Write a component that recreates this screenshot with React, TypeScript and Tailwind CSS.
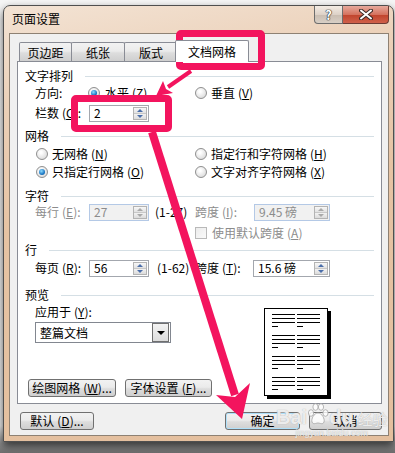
import type { ReactNode } from 'react'

const PINK = '#f3145e'

function K({ k }: { k: string }) {
  return (
    <span className="ml-[3px]">
      (<span className="underline">{k}</span>)
    </span>
  )
}

function Heading({ label, gap = 'ml-[12px]' }: { label: string; gap?: string }) {
  return (
    <div className="flex h-[14px] items-center">
      <span>{label}</span>
      <span className={`h-px flex-1 bg-[#d5dfe5] ${gap}`} />
    </div>
  )
}

function Radio({ checked }: { checked?: boolean }) {
  return (
    <span className="flex h-[12px] w-[12px] shrink-0 items-center justify-center rounded-full border border-[#8f8f8f] bg-[radial-gradient(circle_at_40%_35%,#ffffff_10%,#d6d6d6_90%)]">
      {checked && (
        <span className="h-[6px] w-[6px] rounded-full bg-[radial-gradient(circle_at_40%_35%,#8fdcff_0%,#1c78c4_60%,#0d4f8e_100%)]" />
      )}
    </span>
  )
}

function SpinArrows({ disabled }: { disabled?: boolean }) {
  const tri = disabled ? 'border-[#a9a9a9]' : 'border-[#4b6ea9]'
  return (
    <div className="m-px flex w-[14px] flex-col border border-[#b3b3b3]">
      <div className="flex flex-1 items-center justify-center border-b border-[#c8c8c8] bg-[linear-gradient(#f7f7f7,#e2e2e2)]">
        <span className={`h-0 w-0 border-x-[3px] border-b-[3px] border-x-transparent ${tri} border-t-0`} />
      </div>
      <div className="flex flex-1 items-center justify-center bg-[linear-gradient(#f2f2f2,#dcdcdc)]">
        <span className={`h-0 w-0 border-x-[3px] border-t-[3px] border-x-transparent ${tri} border-b-0`} />
      </div>
    </div>
  )
}

function Spin({ value, width, disabled }: { value: string; width: string; disabled?: boolean }) {
  return (
    <div
      className={`flex h-[17px] items-stretch border ${width} ${
        disabled ? 'border-[#b4c9e6] bg-[#f1f1f1] text-[#8c8c8c]' : 'border-[#a3a7ae] bg-white text-black'
      }`}
    >
      <span className="flex flex-1 items-center pl-[4px]">{value}</span>
      <SpinArrows disabled={disabled} />
    </div>
  )
}

function Btn({ children, className = '' }: { children: ReactNode; className?: string }) {
  return (
    <button
      type="button"
      className={`flex h-[18px] items-center justify-center rounded-[3px] border border-[#707070] bg-[linear-gradient(#f2f2f2_0%,#ebebeb_45%,#dddddd_55%,#cfcfcf_100%)] text-[12px] leading-[14px] ${className}`}
    >
      {children}
    </button>
  )
}

function Row({ children }: { children: ReactNode }) {
  return <div className="ml-[10px] flex h-[18px] items-center">{children}</div>
}

function PreviewPage() {
  return (
    <div className="mt-[6px] h-[88px] w-[64px] border border-black bg-white shadow-[3px_3px_0_#000]">
      <div className="flex gap-[2px] pl-[7px] pt-[5px]">
        {[0, 1].map(c => (
          <div key={c} className="flex w-[23px] flex-col">
            {[0, 1, 2, 3].map(g => (
              <div key={g} className="mb-[8px] flex flex-col gap-[3px]">
                <div className="h-px bg-black" />
                <div className="h-px bg-black" />
                <div className="h-px bg-black" />
                <div className="h-px w-[6px] bg-black" />
              </div>
            ))}
          </div>
        ))}
      </div>
    </div>
  )
}

export default function App() {
  return (
    <div className="relative h-[453px] w-[395px] overflow-hidden bg-[linear-gradient(#f6f6f6_0%,#ececec_94%,#8c8c8c_98%,#6f6f6f_100%)] pl-[3px] pt-[5px] font-['Noto_Sans_CJK_SC','Liberation_Sans',sans-serif] text-[12px] leading-[14px] text-black">
      {/* window */}
      <div className="flex h-[437px] w-[391px] flex-col rounded-t-[7px] border border-[#4f4f4f] bg-[linear-gradient(170deg,#f3e3d4_0%,#ebd0b8_20%,#e6c3a3_45%,#e4bf9e_100%)] shadow-[0_4px_9px_rgba(0,0,0,0.65)]">
        {/* title bar */}
        <div className="flex h-[27px] items-start">
          <span className="pl-[8px] pt-[6px]">页面设置</span>
          <div className="ml-auto mr-[4px] flex">
            <div className="flex h-[18px] w-[29px] items-center justify-center rounded-bl-[4px] border border-t-0 border-[#6d6d6d] bg-[linear-gradient(#f4ece4_0%,#ddd2c8_50%,#c9bdb1_51%,#d8cfc6_100%)] text-[13px] font-bold text-white [text-shadow:0_0_1px_#222,0_0_1px_#222,0_0_1px_#222]">
              ?
            </div>
            <div className="flex h-[18px] w-[46px] items-center justify-center rounded-br-[4px] border border-l-0 border-t-0 border-[#6d3b33] bg-[linear-gradient(#e7a99c_0%,#d5735f_50%,#c0432c_51%,#d0604a_100%)]">
              <svg width="14" height="11" viewBox="0 0 14 11">
                <path d="M2 1.5 L12 9.5 M12 1.5 L2 9.5" stroke="#3b2a26" strokeWidth="4" strokeLinecap="round" />
                <path d="M2 1.5 L12 9.5 M12 1.5 L2 9.5" stroke="#ffffff" strokeWidth="2" strokeLinecap="round" />
              </svg>
            </div>
          </div>
        </div>

        {/* client */}
        <div className="ml-[5px] mr-[4px] flex h-[403px] flex-col border border-[#8e8173] bg-[#f0f0f0]">
          {/* tabs */}
          <div className="ml-[7px] mt-[6px] flex h-[21px] items-end pl-[2px]">
            <div className="flex h-[19px] w-[53px] items-center justify-center rounded-t-[2px] border border-b-0 border-[#898c95] bg-[linear-gradient(#f2f2f2_0%,#ebebeb_45%,#dddddd_55%,#cfcfcf_100%)] pt-px">
              页边距
            </div>
            <div className="-ml-px flex h-[19px] w-[54px] items-center justify-center rounded-t-[2px] border border-b-0 border-[#898c95] bg-[linear-gradient(#f2f2f2_0%,#ebebeb_45%,#dddddd_55%,#cfcfcf_100%)] pt-px">
              纸张
            </div>
            <div className="-ml-px flex h-[19px] w-[54px] items-center justify-center rounded-t-[2px] border border-b-0 border-[#898c95] bg-[linear-gradient(#f2f2f2_0%,#ebebeb_45%,#dddddd_55%,#cfcfcf_100%)] pt-px">
              版式
            </div>
            <div className="relative z-10 -mb-px -ml-[3px] flex h-[22px] w-[74px] items-center justify-center rounded-t-[2px] border border-b-0 border-[#898c95] bg-white">
              文档网格
            </div>
          </div>

          {/* panel */}
          <div className="ml-[7px] flex h-[343px] w-[365px] flex-col border border-[#898c95] bg-white px-[7px]">
            <div className="mt-[7px]">
              <Heading label="文字排列" />
            </div>
            <div className="mt-px">
              <Row>
                <div className="flex w-[160px] items-center">
                  <span className="w-[53px]">方向:</span>
                  <Radio checked />
                  <span className="ml-[5px]">
                    水平<K k="Z" />
                  </span>
                </div>
                <Radio />
                <span className="ml-[4px]">
                  垂直<K k="V" />
                </span>
              </Row>
            </div>
            <div className="mt-[2px]">
              <Row>
                <span className="w-[54px]">
                  栏数<K k="C" />:
                </span>
                <Spin value="2" width="w-[60px]" />
              </Row>
            </div>

            <div className="mt-[7px]">
              <Heading label="网格" />
            </div>
            <div className="mt-[2px]">
              <Row>
                <div className="flex w-[160px] items-center pl-px">
                  <Radio />
                  <span className="ml-[4px]">
                    无网格<K k="N" />
                  </span>
                </div>
                <Radio />
                <span className="ml-[4px]">
                  指定行和字符网格<K k="H" />
                </span>
              </Row>
              <Row>
                <div className="flex w-[160px] items-center pl-px">
                  <Radio checked />
                  <span className="ml-[4px]">
                    只指定行网格<K k="O" />
                  </span>
                </div>
                <Radio />
                <span className="ml-[4px]">
                  文字对齐字符网格<K k="X" />
                </span>
              </Row>
            </div>

            <div className="mt-[8px]">
              <Heading label="字符" />
            </div>
            <Row>
              <div className="flex w-[160px] items-center">
                <span className="w-[54px] text-[#8c8c8c]">
                  每行<K k="E" />:
                </span>
                <Spin value="27" width="w-[60px]" disabled />
                <span className="ml-[6px]">(1-27)</span>
              </div>
              <span className="w-[59px] text-[#8c8c8c]">
                跨度<K k="I" />:
              </span>
              <Spin value="9.45 磅" width="w-[76px]" disabled />
            </Row>
            <div className="mt-[3px]">
              <Row>
                <div className="w-[160px]" />
                <span className="h-[12px] w-[12px] border border-[#b9b9b9] bg-[linear-gradient(135deg,#ececec,#fafafa)]" />
                <span className="ml-[5px] text-[#8c8c8c]">
                  使用默认跨度<K k="A" />
                </span>
              </Row>
            </div>

            <div className="mt-px">
              <Heading label="行" />
            </div>
            <div className="mt-[2px]">
              <Row>
                <div className="flex w-[160px] items-center">
                  <span className="w-[54px]">
                    每页<K k="R" />:
                  </span>
                  <Spin value="56" width="w-[60px]" />
                  <span className="ml-[8px]">(1-62)</span>
                </div>
                <span className="w-[58px]">
                  跨度<K k="T" />:
                </span>
                <Spin value="15.6 磅" width="w-[77px]" />
              </Row>
            </div>

            <div className="mt-[11px]">
              <Heading label="预览" />
            </div>
            <div className="flex">
              <div className="flex w-[239px] flex-col">
                <div className="mt-px">
                  <Row>
                    应用于<K k="Y" />:
                  </Row>
                </div>
                <div className="ml-[10px] mt-px flex h-[21px] w-[136px] items-center border border-[#828790] bg-white">
                  <span className="flex-1 pl-[4px]">整篇文档</span>
                  <div className="mr-px flex h-[19px] w-[17px] items-center justify-center border border-[#6f6f6f] bg-[linear-gradient(#f3f3f3,#dcdcdc)]">
                    <span className="h-0 w-0 border-x-[4px] border-t-[4px] border-b-0 border-x-transparent border-t-black" />
                  </div>
                </div>
                <div className="ml-[3px] mt-[36px] flex gap-[9px]">
                  <Btn className="w-[88px]">
                    绘图网格<K k="W" />...
                  </Btn>
                  <Btn className="w-[87px]">
                    字体设置<K k="F" />...
                  </Btn>
                </div>
              </div>
              <PreviewPage />
            </div>
          </div>

          {/* dialog buttons */}
          <div className="ml-[10px] mr-[6px] mt-[8px] flex">
            <Btn className="w-[74px]">
              默认<K k="D" />...
            </Btn>
            <Btn className="ml-auto w-[75px] border-[#3d8fd3] shadow-[inset_0_0_0_1px_#aee0fa]">确定</Btn>
            <Btn className="ml-[9px] w-[73px]">取消</Btn>
          </div>
        </div>
      </div>

      {/* highlight boxes */}
      <div className="pointer-events-none absolute left-[176px] top-[30px] h-[40px] w-[89px] rounded-[5px] border-[7px] border-[#f3145e]" />
      <div className="pointer-events-none absolute left-[71px] top-[95px] h-[37px] w-[101px] rounded-[5px] border-[7px] border-[#f3145e]" />

      {/* arrows */}
      <svg className="pointer-events-none absolute left-0 top-0" width="395" height="453">
        <line x1="191" y1="71" x2="168" y2="87" stroke={PINK} strokeWidth="4" />
        <polygon points="156,96 163,81 166,89 173,93" fill={PINK} />
        <line x1="152" y1="132" x2="235" y2="395" stroke={PINK} strokeWidth="8" />
        <polygon points="242,419 216,395 235,397 250,383" fill={PINK} />
      </svg>

      {/* watermark */}
      <div className="pointer-events-none absolute left-[276px] top-[402px] flex flex-col items-center text-white/80">
        <div className="flex items-end font-['Liberation_Sans',sans-serif] text-[20px] font-bold leading-[22px] [text-shadow:0_0_1px_#9a9a9a]">
          <span>Bai</span>
          <svg width="22" height="24" viewBox="0 0 22 24" className="mb-[2px]">
            <g fill="rgba(255,255,255,0.8)" stroke="#a5a5a5" strokeWidth="0.8">
              <ellipse cx="4" cy="11" rx="2.6" ry="3.3" />
              <ellipse cx="8.5" cy="5" rx="2.6" ry="3.3" />
              <ellipse cx="14" cy="5" rx="2.6" ry="3.3" />
              <ellipse cx="18.5" cy="11" rx="2.6" ry="3.3" />
              <path d="M11 11 C7 11 4 17 5 20 C6 23 9 21 11 21 C13 21 16 23 17 20 C18 17 15 11 11 11 Z" />
            </g>
          </svg>
          <span>du</span>
          <span className="ml-[4px] font-['Noto_Sans_CJK_SC',sans-serif] text-[15px] font-normal leading-[18px]">经验</span>
        </div>
        <span className="font-['Liberation_Sans',sans-serif] text-[9px] leading-[10px] [text-shadow:0_0_1px_#9a9a9a]">
          jingyan.baidu.com
        </span>
      </div>
    </div>
  )
}
